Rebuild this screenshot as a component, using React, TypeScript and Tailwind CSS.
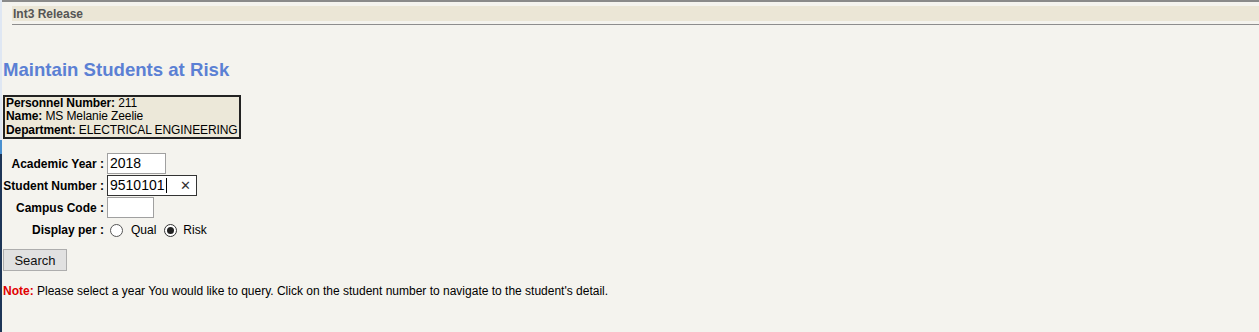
import React from "react";

const rows = [
  { label: "Academic Year :", value: "2018", width: "w-[59px]" },
  { label: "Student Number :", value: "9510101", width: "w-[90px]", focused: true },
  { label: "Campus Code :", value: "", width: "w-[47px]" },
];

export default function App() {
  return (
    <div className="flex h-[332px] w-[1259px] bg-[#f4f3ee] font-['Liberation_Sans',Arial,sans-serif] text-black">
      {/* left frame edge */}
      <div className="flex w-[2px] flex-col">
        <div className="h-[140px] bg-[#dfe7f3]" />
        <div className="h-[14px] bg-[#4a90d0]" />
        <div className="flex-1 bg-[#1d3557]" />
      </div>

      <div className="flex flex-1 flex-col">
        <div className="h-[2px] bg-[#8a8a8a]" />
        <div className="pl-[10px] pt-[4px]">
          <div className="flex h-[15px] items-center bg-[#ebe6d6] pl-[1px] text-[12px] font-bold text-[#555]">
            Int3 Release
          </div>
          <div className="mt-[3px] h-[1px] bg-[#8d8d8d]" />
        </div>

        <div className="pl-[1px]">
          <h1 className="mt-[34px] text-[18.6px] font-bold leading-[22px] text-[#5b80d4]">
            Maintain Students at Risk
          </h1>

          <div className="mt-[14px] w-[238px] whitespace-nowrap border-2 border-[#222] bg-[#ece8d9] px-[1px] text-[12px] leading-[13.4px] tracking-[-0.1px]">
            <div><b>Personnel Number:</b> 211</div>
            <div><b>Name:</b> MS Melanie Zeelie</div>
            <div><b>Department:</b> ELECTRICAL ENGINEERING</div>
          </div>

          <div className="mt-[14px] grid grid-cols-[101px_auto] items-center gap-x-[3px] gap-y-[1px] text-[12px]">
            {rows.map((r) => (
              <React.Fragment key={r.label}>
                <div className="text-right font-bold">{r.label}</div>
                <div
                  className={`${r.width} flex h-[21px] items-center border px-[2px] text-[14px] ${
                    r.focused ? "border-[#333] bg-white" : "border-[#a0a0a0] bg-white"
                  }`}
                >
                  {r.value}
                  {r.focused && (
                    <>
                      <span className="ml-[1px] h-[15px] w-[1px] bg-black" />
                      <span className="ml-auto mr-[3px] text-[13px] leading-none text-[#333]">✕</span>
                    </>
                  )}
                </div>
              </React.Fragment>
            ))}
            <div className="pt-[2px] text-right font-bold">Display per :</div>
            <div className="flex items-center pt-[2px]">
              <span className="ml-[3px] h-[13px] w-[13px] rounded-full border border-[#555] bg-white" />
              <span className="ml-[8px]">Qual</span>
              <span className="ml-[8px] flex h-[13px] w-[13px] items-center justify-center rounded-full border border-[#333] bg-white">
                <span className="h-[7px] w-[7px] rounded-full bg-[#222]" />
              </span>
              <span className="ml-[6px]">Risk</span>
            </div>
          </div>

          <button className="mt-[10px] h-[22px] w-[64px] border border-[#adadad] bg-[#e1e1e1] text-[13px] leading-none text-[#111]">
            Search
          </button>

          <p className="mt-[12px] text-[12px] leading-[14px]">
            <b className="text-[#e00000]">Note:</b> Please select a year You would like to query. Click on the student number to navigate to the student's detail.
          </p>
        </div>
      </div>
    </div>
  );
}
